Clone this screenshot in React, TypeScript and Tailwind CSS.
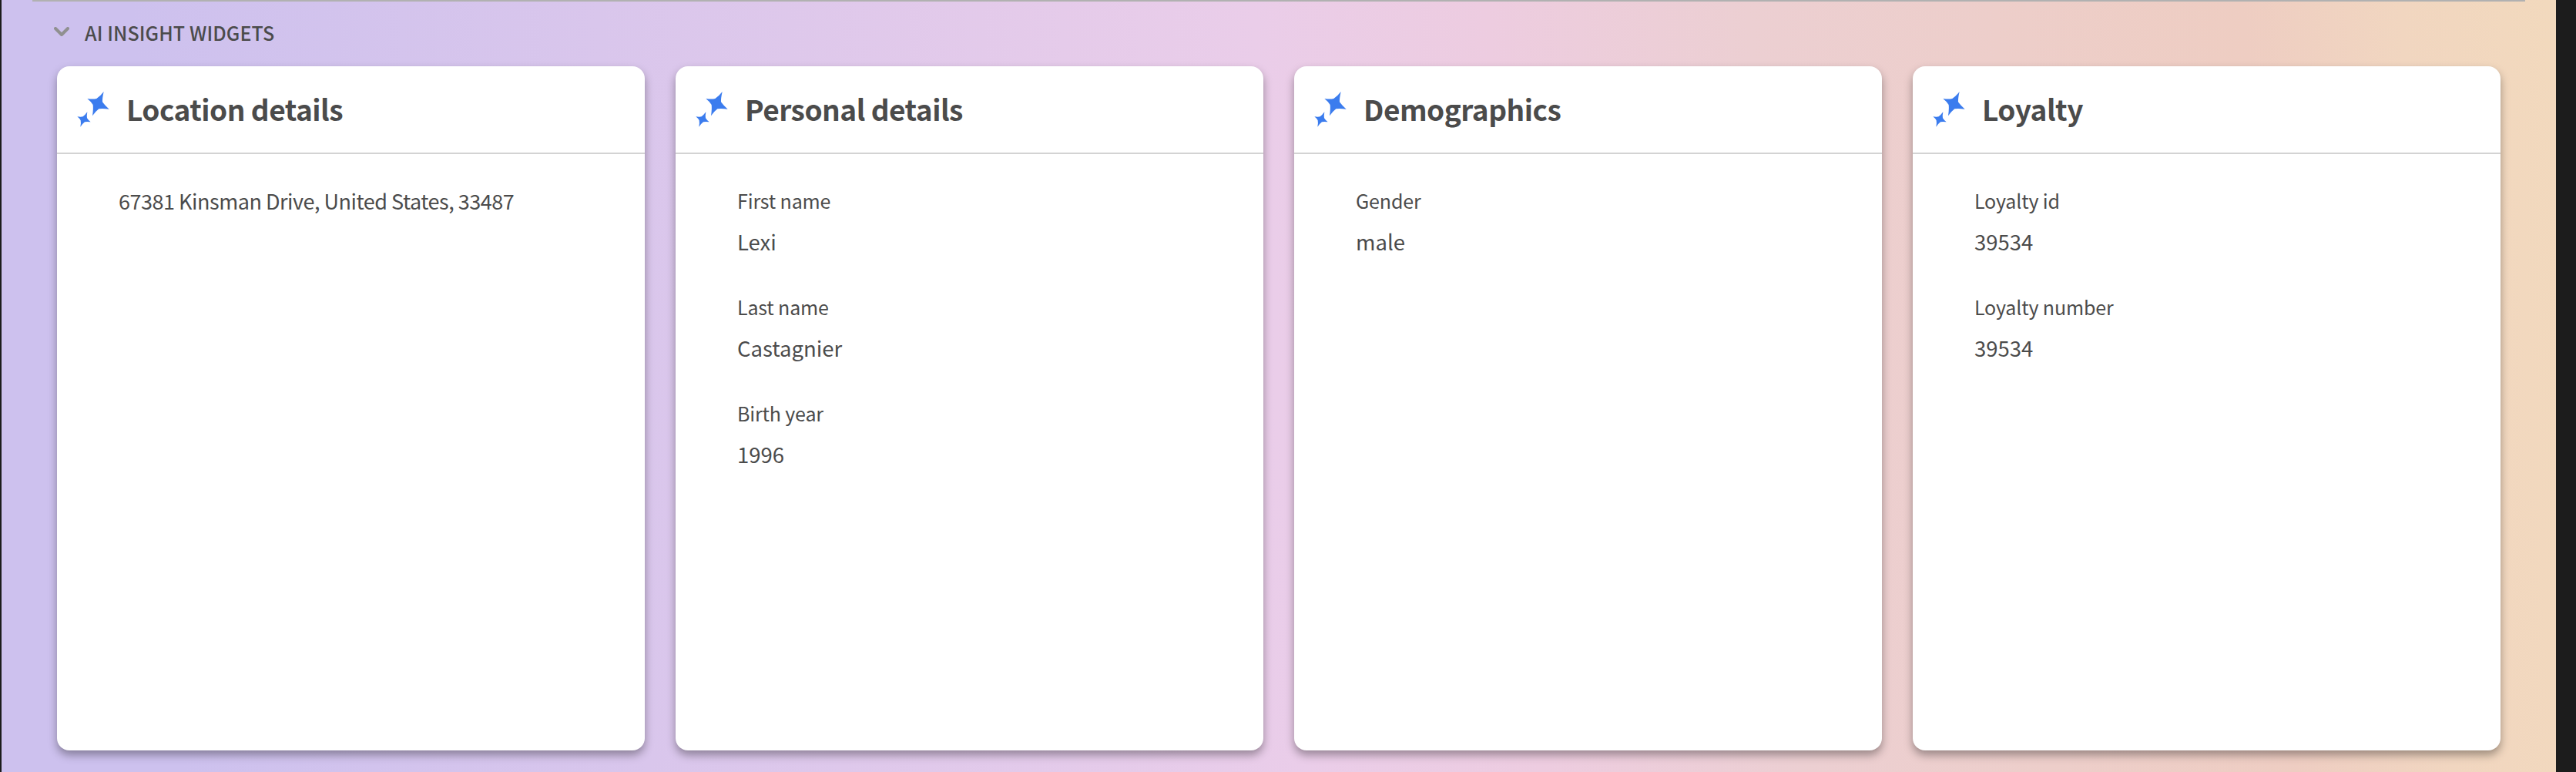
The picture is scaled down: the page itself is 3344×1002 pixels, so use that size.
type Field = { label?: string; value: string };
type Widget = { title: string; fields: Field[] };

const widgets: Widget[] = [
  { title: "Location details", fields: [{ value: "67381 Kinsman Drive, United States, 33487" }] },
  {
    title: "Personal details",
    fields: [
      { label: "First name", value: "Lexi" },
      { label: "Last name", value: "Castagnier" },
      { label: "Birth year", value: "1996" },
    ],
  },
  { title: "Demographics", fields: [{ label: "Gender", value: "male" }] },
  {
    title: "Loyalty",
    fields: [
      { label: "Loyalty id", value: "39534" },
      { label: "Loyalty number", value: "39534" },
    ],
  },
];

function Sparkles() {
  return (
    <svg className="h-[46px] w-[42px] shrink-0" viewBox="0 0 126 138" fill="#3b7cee">
      <path d="M104 0 Q98 26 99 40 Q107 52 125 68 Q100 65 85 67 Q72 77 60 94 Q64 68 62 51 Q55 39 40 27 Q62 30 76 27 Q90 18 104 0Z" />
      <path d="M40 79 Q37 95 39 103 Q43 110 53 118 Q38 116 30 118 Q22 124 13 137 Q16 121 14 112 Q10 104 1 97 Q15 99 23 97 Q31 91 40 79Z" />
    </svg>
  );
}

function WidgetField({ label, value }: Field) {
  if (!label) {
    return <p className="text-[27px] leading-[42px] tracking-[-0.48px]">{value}</p>;
  }
  return (
    <div className="flex flex-col gap-3">
      <p className="text-[25px] leading-[40px] tracking-[-0.15px]">{label}</p>
      <p className="text-[27.5px] leading-[42px]">{value}</p>
    </div>
  );
}

export default function App() {
  return (
    <div className="h-[1002px] w-[3344px] overflow-hidden bg-[#1c1c1c] pr-[26px] pl-[2px] font-['Noto_Sans_CJK_SC','Noto_Sans',sans-serif] text-[#4b4b4b]">
      <main className="h-full overflow-hidden bg-[linear-gradient(86deg,#cdc1ee_0%,#cdc1ee_7%,#eacde9_50%,#edcce0_59%,#eccfd2_69%,#eecdc2_88%,#f1d6c0_94%,#f2d9bd_100%)]">
        <hr className="mx-10 h-[2px] border-0 bg-[#b1b1b1]" />
        <h2 className="mb-[2px] flex h-[82px] items-center gap-5 pl-[68px] text-[25px] font-medium tracking-[0.1px]">
          <svg className="h-[12px] w-[20px] -translate-y-[2px]" viewBox="0 0 20 12" fill="none" stroke="#909090" strokeWidth="4" strokeLinecap="round" strokeLinejoin="round">
            <path d="m2 2 8 8 8-8" />
          </svg>
          <span>AI INSIGHT WIDGETS</span>
        </h2>
        <div className="mx-[72px] grid h-[888px] grid-cols-4 gap-10">
          {widgets.map((w) => (
            <section key={w.title} className="rounded-2xl bg-white shadow-[0_6px_12px_rgba(0,0,0,0.35)]">
              <header className="flex h-[114px] items-center gap-[22px] border-b-2 border-[#d3d3d3] pl-[26px]">
                <Sparkles />
                <h3 className="text-[37px] font-bold tracking-[-0.5px]">{w.title}</h3>
              </header>
              <div className="flex flex-col gap-11 px-[80px] pt-10">
                {w.fields.map((f) => (
                  <WidgetField key={f.label ?? f.value} {...f} />
                ))}
              </div>
            </section>
          ))}
        </div>
      </main>
    </div>
  );
}
